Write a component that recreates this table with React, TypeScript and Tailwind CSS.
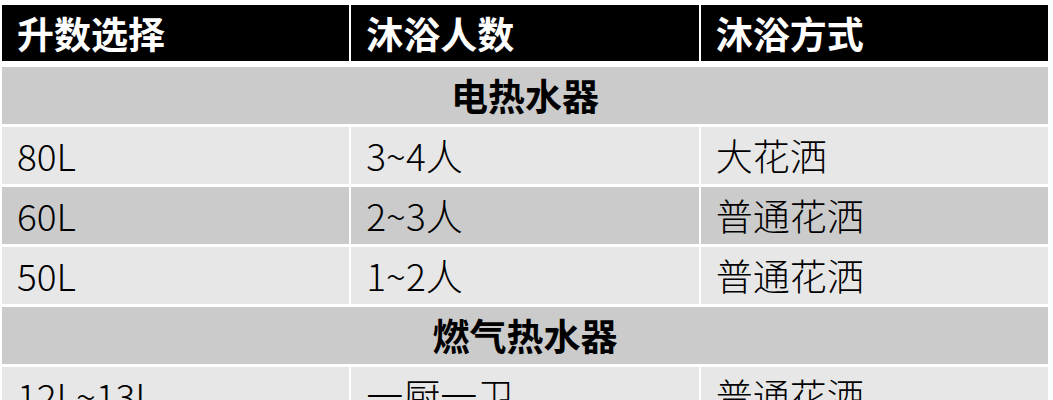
const rows1 = [
  { l: "80L", n: "3~4人", w: "大花洒", dark: false },
  { l: "60L", n: "2~3人", w: "普通花洒", dark: true },
  { l: "50L", n: "1~2人", w: "普通花洒", dark: false },
];

const rows2 = [{ l: "12L~13L", n: "一厨一卫", w: "普通花洒", dark: false }];

function Row({ cells, dark }: { cells: string[]; dark: boolean }) {
  return (
    <div className="grid grid-cols-3 gap-[2px] h-[57px]">
      {cells.map((c, i) => (
        <div
          key={i}
          className={`flex items-center pl-[15px] font-light ${dark ? "bg-[#cbcbcb]" : "bg-[#e7e7e7]"}`}
        >
          {c}
        </div>
      ))}
    </div>
  );
}

function Section({ title }: { title: string }) {
  return (
    <div className="h-[57px] bg-[#cbcbcb] flex items-center justify-center font-bold">
      {title}
    </div>
  );
}

export default function App() {
  return (
    <div
      className="w-[1053px] h-[400px] overflow-hidden bg-white pt-[5px] pl-[2px] pr-[5px] text-[37px] leading-none text-black"
      style={{ fontFamily: '"Noto Sans CJK SC", "Noto Sans", sans-serif' }}
    >
      <div className="flex flex-col gap-[3px]">
        <div className="grid grid-cols-3 gap-[2px] h-[56px] mb-[3px]">
          {["升数选择", "沐浴人数", "沐浴方式"].map((h) => (
            <div key={h} className="bg-black text-white font-bold flex items-center pl-[15px]">
              {h}
            </div>
          ))}
        </div>
        <Section title="电热水器" />
        {rows1.map((r) => (
          <Row key={r.l} cells={[r.l, r.n, r.w]} dark={r.dark} />
        ))}
        <Section title="燃气热水器" />
        {rows2.map((r) => (
          <Row key={r.l} cells={[r.l, r.n, r.w]} dark={r.dark} />
        ))}
      </div>
    </div>
  );
}
